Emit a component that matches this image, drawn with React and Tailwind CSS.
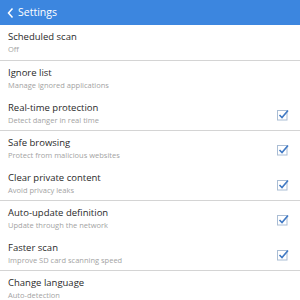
import React from 'react';

const items = [
    { title: 'Scheduled scan', sub: 'Off', line: true },
    { title: 'Ignore list', sub: 'Manage ignored applications' },
    { title: 'Real-time protection', sub: 'Detect danger in real time', check: true, line: true },
    { title: 'Safe browsing', sub: 'Protect from malicious websites', check: true },
    { title: 'Clear private content', sub: 'Avoid privacy leaks', check: true, line: true },
    { title: 'Auto-update definition', sub: 'Update through the network', check: true },
    { title: 'Faster scan', sub: 'Improve SD card scanning speed', check: true, line: true },
    { title: 'Change language', sub: 'Auto-detection' },
];

const CheckBox = () => (
    <svg width="14" height="14" viewBox="0 0 14 14" className="shrink-0 mt-[3px]">
        <rect x="1.5" y="2.5" width="9.5" height="9.5" fill="none" stroke="#aabdd4" strokeWidth="1" />
        <path d="M3.5 7 L6 9.5 L12 2.5" fill="none" stroke="#4079c4" strokeWidth="1.6" />
    </svg>
);

const App = () => {
    return (
        <div className="w-[300px] h-[300px] overflow-hidden bg-white" style={{ fontFamily: '"Open Sans", sans-serif' }}>
            {/* top bar */}
            <div className="h-[25px] bg-[#3c86df] flex items-center pl-[7px] gap-[4px] text-white">
                <svg width="7" height="12" viewBox="0 0 7 12">
                    <path d="M5.5 1.5 L1.5 6 L5.5 10.5" fill="none" stroke="white" strokeWidth="1.5" />
                </svg>
                <span className="text-[10.5px] leading-none">Settings</span>
            </div>

            {items.map((item, i) => (
                <div
                    key={i}
                    className={`flex items-center justify-between pl-[8px] pr-[10px] ${i === 0 ? 'h-[36px]' : 'h-[35px]'} ${item.line ? 'border-b border-[#d4d4d4]' : ''}`}
                >
                    <div className="flex flex-col">
                        <span className="text-[9.5px] leading-[14px] text-[#2a2a2a]">{item.title}</span>
                        <span className="text-[7.5px] leading-[11px] text-[#a3a3a3]">{item.sub}</span>
                    </div>
                    {item.check && <CheckBox />}
                </div>
            ))}
        </div>
    );
};

export default App;
